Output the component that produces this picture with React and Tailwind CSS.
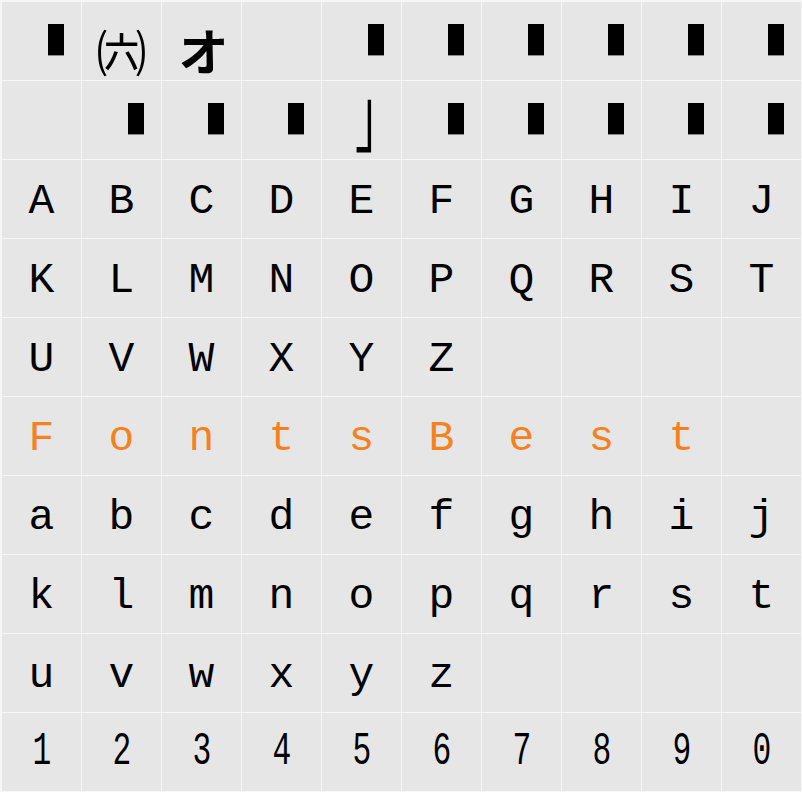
import React from "react";

const upper1 = "ABCDEFGHIJ".split("");
const upper2 = "KLMNOPQRST".split("");
const upper3 = ["U", "V", "W", "X", "Y", "Z", "", "", "", ""];
const brand = ["F", "o", "n", "t", "s", "B", "e", "s", "t", ""];
const lower1 = "abcdefghij".split("");
const lower2 = "klmnopqrst".split("");
const lower3 = ["u", "v", "w", "x", "y", "z", "", "", "", ""];
const digits = "1234567890".split("");

const Box = () => (
  <div className="w-full h-full pl-[46px] pt-[22px]">
    <div className="w-4 h-8 bg-black border-b border-[#8a8a8a]"></div>
  </div>
);

const Cell = ({ children }) => (
  <div className="bg-[#e6e6e6] w-[79px] h-[78px]">{children}</div>
);

const Glyph = ({ ch, orange, narrow }) => (
  <div
    className={`w-full h-full flex items-center justify-center font-['Courier_New','Nimbus_Mono_PS','FreeMono','Liberation_Mono',monospace] leading-none ${
      narrow ? "text-[46px]" : "text-[43px]"
    } ${orange ? "text-[#f5821f]" : "text-black"}`}
  >
    <span className={narrow ? "inline-block scale-x-[0.68]" : "inline-block translate-y-[2px]"}>{ch}</span>
  </div>
);

const Cjk = ({ ch, bold, size, nudge }) => (
  <div
    className={`w-full h-full flex items-center justify-center font-['Noto_Sans_CJK_JP',sans-serif] leading-none text-black ${size} ${
      bold ? "font-bold" : "font-normal"
    }`}
  >
    <span className={`inline-block ${nudge}`}>{ch}</span>
  </div>
);

export default function App() {
  const row1 = [
    <Box />,
    <Cjk ch="㈥" size="text-[50px]" nudge="translate-y-[9px]" />,
    <Cjk ch="オ" bold size="text-[50px]" nudge="translate-y-[8px] translate-x-[2px]" />,
    null,
    <Box />,
    <Box />,
    <Box />,
    <Box />,
    <Box />,
    <Box />,
  ];
  const row2 = [
    null,
    <Box />,
    <Box />,
    <Box />,
    <Cjk
      ch="｣"
      size="text-[46px]"
      nudge="translate-x-[5px] translate-y-[7px] scale-y-[1.76] origin-bottom"
    />,
    <Box />,
    <Box />,
    <Box />,
    <Box />,
    <Box />,
  ];
  const textRow = (arr, opts = {}) =>
    arr.map((c) => (c ? <Glyph ch={c} {...opts} /> : null));

  const rows = [
    row1,
    row2,
    textRow(upper1),
    textRow(upper2),
    textRow(upper3),
    textRow(brand, { orange: true }),
    textRow(lower1),
    textRow(lower2),
    textRow(lower3),
    textRow(digits, { narrow: true }),
  ];

  return (
    <div className="w-[802px] h-[792px] bg-[#f6f6f6] pl-[2px] pr-px pt-[2px] pb-px">
      <div className="grid grid-cols-[repeat(10,79px)] grid-rows-[repeat(10,78px)] gap-px">
        {rows.flatMap((row, r) =>
          row.map((content, c) => <Cell key={`${r}-${c}`}>{content}</Cell>)
        )}
      </div>
    </div>
  );
}
